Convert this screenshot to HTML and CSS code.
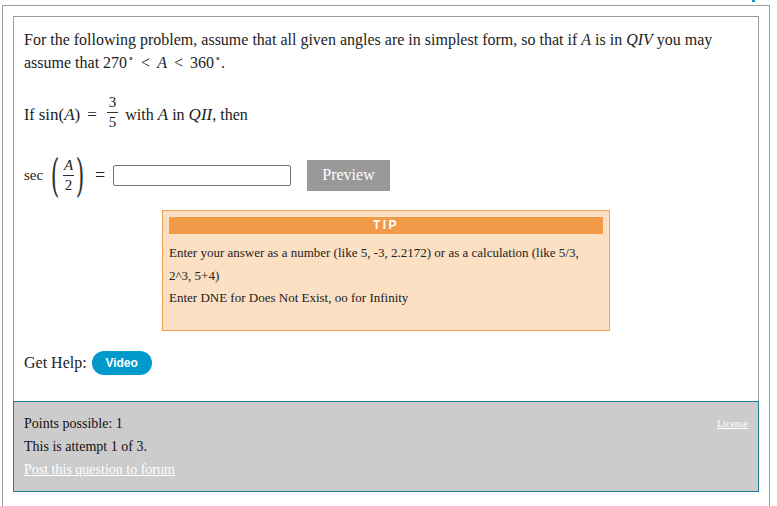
FILE: index.html
```html
<!DOCTYPE html>
<html>
<head>
<meta charset="utf-8">
<link rel="stylesheet" href="styles.css">
</head>
<body>
<div class="topmark"></div>
<div class="outer">
  <div class="question">
    <p class="intro">For the following problem, assume that all given angles are in simplest form, so that if <span class="mi">A</span> is in <span class="mi">QIV</span> you may assume that 270<sup class="deg">&#8728;</sup> <span class="mo">&lt;</span> <span class="mi">A</span> <span class="mo">&lt;</span> 360<sup class="deg">&#8728;</sup>.</p>

    <div class="given"><span class="low">If&nbsp;</span><span class="math low">sin(<span class="mi">A</span>)</span><span class="mo eq low">=</span><span class="frac"><span class="num">3</span><span class="den">5</span></span><span class="low">with <span class="mi m">A</span> in <span class="mi m">QII</span>, then</span></div>

    <div class="answer-row">
      <span class="sec">sec</span>
      <span class="paren lp">(</span>
      <span class="frac small"><span class="num mi">A</span><span class="den">2</span></span>
      <span class="paren rp">)</span>
      <span class="eq2">=</span>
      <input class="answer" type="text">
      <button class="preview">Preview</button>
    </div>

    <div class="tip">
      <div class="tip-head">TIP</div>
      <p class="tip-line first">Enter your answer as a number (like 5, -3, 2.2172) or as a calculation (like 5/3, 2^3, 5+4)</p>
      <p class="tip-line">Enter DNE for Does Not Exist, oo for Infinity</p>
    </div>

    <div class="help">Get Help: <span class="video">Video</span></div>
  </div>
  <div class="footer">
    <div class="footer-text">
      <div>Points possible: 1</div>
      <div>This is attempt 1 of 3.</div>
      <div><a href="#" class="forum">Post this question to forum</a></div>
    </div>
    <a href="#" class="license">License</a>
  </div>
</div>
</body>
</html>
```
FILE: styles.css
```css
html, body {
  margin: 0;
  padding: 0;
  background: #fff;
  font-family: "Liberation Serif", "Times New Roman", serif;
  color: #222;
  overflow: hidden;
}
.topmark {
  position: absolute;
  left: 752px;
  top: 0;
  width: 3px;
  height: 2px;
  background: #1a8fc4;
}
.outer {
  margin: 5px 0 0 2px;
  width: 768px;
  box-sizing: border-box;
  border: 1px solid #9a9a9a;
  border-bottom: none;
  padding: 10px 10px 20px 10px;
  height: 520px;
}
.question {
  border: 1px solid #9a9a9a;
  border-bottom: none;
  padding: 12px 10px 26px 10px;
}
p { margin: 0; }
.intro {
  font-size: 16px;
  line-height: 22.5px;
}
.mi { font-style: italic; }
.mo { margin: 0 3px; }
.deg {
  font-size: 9px;
  line-height: 0;
  vertical-align: 6px;
  margin-left: 1px;
}
.given {
  font-size: 16px;
  margin-top: 19px;
  height: 38px;
  display: flex;
  align-items: center;
  white-space: pre;
}
.low { padding-top: 6px; }
.math { font-size: 17px; }
.m { font-size: 17px; }
.frac {
  display: inline-flex;
  flex-direction: column;
  align-items: center;
  font-size: 15px;
  line-height: 15px;
  margin: 0 7px 0 5px;
}
.frac .num {
  border-bottom: 1px solid #333;
  padding: 0 2px 2px;
}
.frac .den { padding-top: 2px; }
.eq { margin: 0 5px 0 7px; font-size: 17px; }
.answer-row {
  display: flex;
  align-items: center;
  margin-top: 23px;
  height: 42px;
  font-size: 16px;
}
.sec {
  font-size: 15px;
  width: 21px;
  margin-right: 5px;
}
.paren {
  display: inline-flex;
  justify-content: center;
  width: 10px;
  font-size: 22px;
  transform: scaleY(2);
  font-family: "DejaVu Serif", serif;
  font-weight: 300;
  color: #333;
}
.rp { width: 8px; margin-left: 1px; }
.frac.small {
  width: 13px;
  margin: 0 0 0 2px;
  font-size: 15px;
  line-height: 15px;
}
.frac.small .num { font-size: 15px; padding: 0 1px 2px; }
.eq2 {
  width: 12px;
  margin: 0 7px 0 10px;
  font-size: 18px;
  text-align: center;
}
.answer {
  width: 178px;
  height: 21px;
  box-sizing: border-box;
  border: 1px solid #767676;
  border-radius: 2px;
  margin: 0;
  padding: 0;
}
.preview {
  margin-left: 16px;
  background: #999;
  color: #fff;
  border: none;
  width: 83px;
  height: 31px;
  font-family: "Liberation Serif", serif;
  font-size: 16px;
  padding: 0;
}
.tip {
  width: 448px;
  margin: 14px auto 0;
  box-sizing: border-box;
  background: #fbe0c3;
  border: 1px solid #f0a04f;
  padding: 6px 6px 20px 6px;
}
.tip-head {
  background: #f19a48;
  color: #fff;
  font-family: "Liberation Sans", Arial, sans-serif;
  font-weight: bold;
  font-size: 12px;
  letter-spacing: 2.5px;
  text-align: center;
  height: 17px;
  line-height: 17px;
}
.tip-line {
  font-size: 13px;
  line-height: 22.5px;
  color: #222;
}
.tip-line.first { margin-top: 8px; }
.help {
  margin-top: 20px;
  font-size: 16px;
  display: flex;
  align-items: center;
  height: 24px;
}
.video {
  display: inline-block;
  margin-left: 5px;
  background: #0099cc;
  color: #fff;
  font-family: "Liberation Sans", Arial, sans-serif;
  font-weight: bold;
  font-size: 12px;
  width: 60px;
  height: 24px;
  line-height: 24px;
  text-align: center;
  border-radius: 12px;
}
.footer {
  background: #cccccc;
  border: 1px solid #1e7e9e;
  display: flex;
  justify-content: space-between;
  align-items: flex-start;
  padding: 10px 10px 5px 10px;
  height: 91px;
  box-sizing: border-box;
}
.footer-text {
  font-size: 14px;
  line-height: 23px;
  color: #111;
}
.forum { color: #fff; }
.license {
  color: #fff;
  font-size: 10px;
  line-height: 12px;
  margin-top: 6px;
}
```
